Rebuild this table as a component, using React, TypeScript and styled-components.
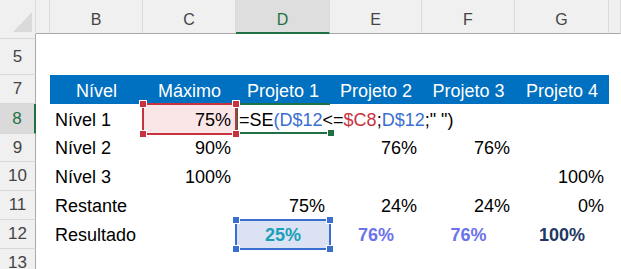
import React from 'react';
import styled, { createGlobalStyle, css } from 'styled-components';

const GREEN = '#1e7145';
const REF_BLUE = '#3a6fd0';
const REF_RED = '#c8323e';

const GlobalStyle = createGlobalStyle`
  html, body {
    margin: 0;
    padding: 0;
    background: #fff;
    overflow: hidden;
  }
  body {
    font-family: 'Liberation Sans', Arial, sans-serif;
  }
  * {
    box-sizing: border-box;
  }
`;

type Align = 'left' | 'right' | 'center';
type Mark = 'red' | 'blue';

interface CellData {
  text?: React.ReactNode;
  align?: Align;
  tone?: string;
  mark?: Mark;
  editing?: boolean;
}

interface RowData {
  label: string;
  height: number;
  active?: boolean;
  banner?: boolean;
  cells: Record<string, CellData>;
}

const columns = [
  { key: 'A', label: '', width: 14 },
  { key: 'B', label: 'B', width: 93 },
  { key: 'C', label: 'C', width: 93 },
  { key: 'D', label: 'D', width: 94 },
  { key: 'E', label: 'E', width: 92 },
  { key: 'F', label: 'F', width: 93 },
  { key: 'G', label: 'G', width: 94 },
  { key: 'H', label: '', width: 12 },
];

const ACTIVE_COL = 'D';

const Formula = () => (
  <FormulaText>
    =SE<Tok $c={REF_BLUE}>(</Tok>
    <Tok $c={REF_BLUE}>D$12</Tok>&lt;=<Tok $c={REF_RED}>$C8</Tok>;
    <Tok $c={REF_BLUE}>D$12</Tok>;" ")
  </FormulaText>
);

const rows: RowData[] = [
  { label: '', height: 5, cells: {} },
  { label: '5', height: 36, cells: {} },
  {
    label: '7',
    height: 29,
    banner: true,
    cells: {
      B: { text: 'Nível', align: 'center' },
      C: { text: 'Máximo', align: 'center' },
      D: { text: 'Projeto 1', align: 'center' },
      E: { text: 'Projeto 2', align: 'center' },
      F: { text: 'Projeto 3', align: 'center' },
      G: { text: 'Projeto 4', align: 'center' },
    },
  },
  {
    label: '8',
    height: 30,
    active: true,
    cells: {
      B: { text: 'Nível 1' },
      C: { text: '75%', align: 'right', mark: 'red' },
      D: { text: <Formula />, editing: true },
    },
  },
  {
    label: '9',
    height: 28,
    cells: {
      B: { text: 'Nível 2' },
      C: { text: '90%', align: 'right' },
      E: { text: '76%', align: 'right' },
      F: { text: '76%', align: 'right' },
    },
  },
  {
    label: '10',
    height: 29,
    cells: {
      B: { text: 'Nível 3' },
      C: { text: '100%', align: 'right' },
      G: { text: '100%', align: 'right' },
    },
  },
  {
    label: '11',
    height: 29,
    cells: {
      B: { text: 'Restante' },
      D: { text: '75%', align: 'right' },
      E: { text: '24%', align: 'right' },
      F: { text: '24%', align: 'right' },
      G: { text: '0%', align: 'right' },
    },
  },
  {
    label: '12',
    height: 29,
    cells: {
      B: { text: 'Resultado' },
      D: { text: '25%', align: 'center', tone: '#1a9fb9', mark: 'blue' },
      E: { text: '76%', align: 'center', tone: '#6b72ea' },
      F: { text: '76%', align: 'center', tone: '#6b72ea' },
      G: { text: '100%', align: 'center', tone: '#1f3864' },
    },
  },
  { label: '13', height: 29, cells: {} },
];

const Handles = ({ color }: { color: string }) => (
  <>
    <Handle $c={color} $v="top" $h="left" />
    <Handle $c={color} $v="top" $h="right" />
    <Handle $c={color} $v="bottom" $h="left" />
    <Handle $c={color} $v="bottom" $h="right" />
  </>
);

export default function App() {
  return (
    <Page>
      <GlobalStyle />
      <HeaderRow>
        <Corner>
          <CornerTriangle />
        </Corner>
        {columns.map((col) => (
          <ColHead key={col.key} $w={col.width} $active={col.key === ACTIVE_COL}>
            {col.label}
          </ColHead>
        ))}
      </HeaderRow>
      {rows.map((row, i) => (
        <SheetRow key={i} $h={row.height}>
          <RowHead $active={row.active} $sliver={row.label === ''}>
            {row.label}
          </RowHead>
          {columns.map((col) => {
            const cell = row.cells[col.key] || {};
            const banner = row.banner && col.key !== 'A' && col.key !== 'H';
            return (
              <Cell
                key={col.key}
                $w={col.width}
                $align={cell.align || 'left'}
                $banner={!!banner}
                $tone={cell.tone}
                $mark={cell.mark}
              >
                {cell.text}
                {cell.mark && (
                  <RefFrame $c={cell.mark === 'red' ? REF_RED : REF_BLUE}>
                    <Handles color={cell.mark === 'red' ? REF_RED : REF_BLUE} />
                  </RefFrame>
                )}
                {cell.editing && (
                  <EditFrame>
                    <Handle $c={GREEN} $v="bottom" $h="right" />
                  </EditFrame>
                )}
              </Cell>
            );
          })}
        </SheetRow>
      ))}
    </Page>
  );
}

const Page = styled.div`
  width: 621px;
  height: 269px;
  overflow: hidden;
  display: flex;
  flex-direction: column;
  background: #fff;
`;

const HeaderRow = styled.div`
  display: flex;
  height: 34px;
  flex-shrink: 0;
  background: #f0f0f0;
`;

const Corner = styled.div`
  position: relative;
  width: 36px;
  flex-shrink: 0;
  border-right: 1px solid #dcdcdc;
`;

const CornerTriangle = styled.div`
  position: absolute;
  right: 3px;
  bottom: 2px;
  width: 19px;
  height: 20px;
  background: #dadada;
  clip-path: polygon(100% 0, 100% 100%, 0 100%);
`;

const ColHead = styled.div<{ $w: number; $active?: boolean }>`
  width: ${({ $w }) => $w}px;
  flex-shrink: 0;
  display: flex;
  align-items: flex-end;
  justify-content: center;
  padding-bottom: 4px;
  font-size: 16px;
  color: #444;
  border-right: 1px solid #dadada;
  border-bottom: 1px solid #a8a8a8;
  ${({ $active }) =>
    $active &&
    css`
      background: #dedede;
      color: ${GREEN};
      border-bottom: 2px solid ${GREEN};
      padding-bottom: 3px;
    `}
`;

const SheetRow = styled.div<{ $h: number }>`
  display: flex;
  height: ${({ $h }) => $h}px;
  flex-shrink: 0;
`;

const RowHead = styled.div<{ $active?: boolean; $sliver?: boolean }>`
  width: 36px;
  flex-shrink: 0;
  display: flex;
  align-items: center;
  justify-content: center;
  font-size: 17px;
  color: #444;
  background: #f0f0f0;
  border-bottom: 1px solid #d8d8d8;
  border-right: 1px solid #a8a8a8;
  ${({ $active }) =>
    $active &&
    css`
      background: #dadada;
      color: ${GREEN};
      border-right: 2px solid ${GREEN};
    `}
`;

const Cell = styled.div<{
  $w: number;
  $align: Align;
  $banner: boolean;
  $tone?: string;
  $mark?: Mark;
}>`
  position: relative;
  width: ${({ $w }) => $w}px;
  flex-shrink: 0;
  display: flex;
  align-items: flex-end;
  justify-content: ${({ $align }) =>
    $align === 'center' ? 'center' : $align === 'right' ? 'flex-end' : 'flex-start'};
  padding: 0 5px 3px 5px;
  font-size: 18px;
  color: #000;
  white-space: nowrap;
  ${({ $banner }) =>
    $banner &&
    css`
      background: #0070c0;
      color: #fff;
      padding-bottom: 2px;
    `}
  ${({ $tone }) =>
    $tone &&
    css`
      color: ${$tone};
      font-weight: bold;
    `}
  ${({ $mark }) => $mark === 'red' && 'background: #fbe6e7;'}
  ${({ $mark }) => $mark === 'blue' && 'background: #dae2f4;'}
`;

const RefFrame = styled.div<{ $c: string }>`
  position: absolute;
  inset: -1px;
  border: 2px solid ${({ $c }) => $c};
  z-index: 2;
  pointer-events: none;
`;

const EditFrame = styled.div`
  position: absolute;
  top: -1px;
  left: 0;
  right: 0;
  bottom: 0;
  border-top: 2px solid ${GREEN};
  border-left: 2px solid ${GREEN};
  border-bottom: 2px solid ${GREEN};
  z-index: 1;
  pointer-events: none;
`;

const Handle = styled.span<{ $c: string; $v: 'top' | 'bottom'; $h: 'left' | 'right' }>`
  position: absolute;
  width: 6px;
  height: 6px;
  background: ${({ $c }) => $c};
  outline: 1px solid #fff;
  ${({ $v }) => $v}: -4px;
  ${({ $h }) => $h}: -4px;
`;

const FormulaText = styled.span`
  position: relative;
  z-index: 3;
  margin-left: -2px;
  font-size: 18px;
  color: #000;
`;

const Tok = styled.span<{ $c: string }>`
  color: ${({ $c }) => $c};
`;
